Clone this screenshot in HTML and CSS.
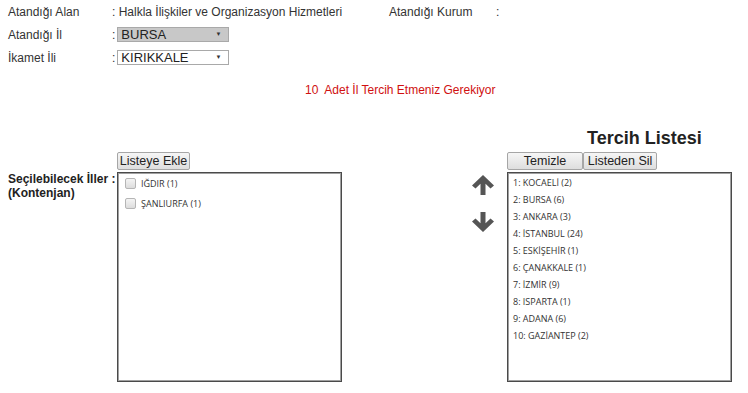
FILE: index.html
```html
<!DOCTYPE html>
<html>
<head>
  <title>İl Tercih Listesi</title>
  <link rel="stylesheet" href="styles.css">
</head>
<body>
  <div class="info">
    <div class="info-row">
      <span class="info-label">Atandığı Alan</span>
      <span class="info-value">: Halkla İlişkiler ve Organizasyon Hizmetleri</span>
      <span class="info-label wide">Atandığı Kurum</span>
      <span class="info-value">:</span>
    </div>
    <div class="info-row">
      <span class="info-label">Atandığı İl</span>
      <span class="info-value">:<span class="select-box disabled">BURSA<span class="caret">&#9660;</span></span></span>
    </div>
    <div class="info-row">
      <span class="info-label">İkamet İli</span>
      <span class="info-value">:<span class="select-box">KIRIKKALE<span class="caret">&#9660;</span></span></span>
    </div>
  </div>

  <p class="notice">10&nbsp; Adet İl Tercih Etmeniz Gerekiyor</p>

  <h3 class="list-title">Tercih Listesi</h3>

  <div class="chooser">
    <div class="chooser-label">Seçilebilecek İller :<br>(Kontenjan)</div>

    <div class="list-col">
      <div class="buttons">
        <button class="btn btn-add">Listeye Ekle</button>
      </div>
      <div class="list-box cities">
        <label class="city"><span class="check"></span>IĞDIR (1)</label>
        <label class="city"><span class="check"></span>ŞANLIURFA (1)</label>
      </div>
    </div>

    <div class="arrows">
      <svg class="arrow" width="22" height="20" viewBox="0 0 22 20">
        <path d="M11 0 L22 10.5 L18.5 13.5 L13.5 8.8 L13.5 20 L8.5 20 L8.5 8.8 L3.5 13.5 L0 10.5 Z" fill="#555"/>
      </svg>
      <svg class="arrow" width="22" height="20" viewBox="0 0 22 20">
        <path d="M11 20 L22 9.5 L18.5 6.5 L13.5 11.2 L13.5 0 L8.5 0 L8.5 11.2 L3.5 6.5 L0 9.5 Z" fill="#555"/>
      </svg>
    </div>

    <div class="list-col">
      <div class="buttons">
        <button class="btn btn-clear">Temizle</button><button class="btn btn-remove">Listeden Sil</button>
      </div>
      <div class="list-box picks">
        <div class="pick">1: KOCAELİ (2)</div>
        <div class="pick">2: BURSA (6)</div>
        <div class="pick">3: ANKARA (3)</div>
        <div class="pick">4: İSTANBUL (24)</div>
        <div class="pick">5: ESKİŞEHİR (1)</div>
        <div class="pick">6: ÇANAKKALE (1)</div>
        <div class="pick">7: İZMİR (9)</div>
        <div class="pick">8: ISPARTA (1)</div>
        <div class="pick">9: ADANA (6)</div>
        <div class="pick">10: GAZİANTEP (2)</div>
      </div>
    </div>
  </div>
</body>
</html>
```

FILE: styles.css
```css
body {
  font-family: "Liberation Sans", Arial, sans-serif;
  font-size: 12px;
  color: #333;
  margin: 0;
  padding: 0 8px;
  background-color: white;
}

/* top info block */
.info-row {
  display: flex;
  align-items: center;
  height: 23px;
}

.info-label {
  flex-shrink: 0;
  width: 104px;
}

.info-label.wide {
  width: 107px;
}

.info-value {
  flex-shrink: 0;
  width: 277px;
  display: flex;
  align-items: center;
  white-space: pre;
}

.select-box {
  display: inline-flex;
  align-items: center;
  justify-content: space-between;
  box-sizing: border-box;
  width: 112px;
  height: 15px;
  margin-left: 2px;
  padding: 0 7px 0 3px;
  border: 1px solid #a9a9a9;
  background-color: white;
  color: #222;
  font-size: 13px;
  line-height: 13px;
}

.select-box.disabled {
  background-color: #c8c8c8;
}

.caret {
  font-size: 6px;
  color: #333;
}

.notice {
  margin: 13px 0 0 297px;
  color: #d01010;
  font-size: 12px;
  line-height: 16px;
}

.list-title {
  margin: 29px 0 0 579px;
  font-size: 18px;
  line-height: 22px;
  color: #222;
}

/* chooser */
.chooser {
  display: flex;
  margin-top: 3px;
}

.chooser-label {
  width: 109px;
  padding-top: 20px;
  font-weight: bold;
  line-height: 14px;
  color: #222;
}

.list-col {
  display: flex;
  flex-direction: column;
  width: 225px;
}

.buttons {
  display: flex;
  height: 18px;
  margin-bottom: 2px;
}

.btn {
  box-sizing: border-box;
  height: 18px;
  padding: 0;
  border: 1px solid #a6a6a6;
  border-radius: 2px;
  background: linear-gradient(#f6f6f6, #dedede);
  font-family: "Liberation Sans", Arial, sans-serif;
  font-size: 12.5px;
  line-height: 15px;
  color: #222;
  white-space: nowrap;
}

.btn-add { width: 73px; }
.btn-clear { width: 76px; }
.btn-remove { width: 74px; }

.list-box {
  box-sizing: border-box;
  height: 210px;
  padding: 0 4px;
  border: 1px solid #4a4a4a;
  box-shadow: inset 0 0 0 1px #a0a0a0;
  font-family: "Open Sans", sans-serif;
  font-size: 9px;
  color: #333;
}

.list-box.picks {
  padding-top: 2px;
}

.city {
  display: flex;
  align-items: center;
  height: 20px;
  padding-left: 3px;
}

.check {
  width: 9px;
  height: 9px;
  margin-right: 5px;
  border: 1px solid #b5b5b5;
  border-radius: 2px;
  background: linear-gradient(#f4f4f4, #dcdcdc);
}

.pick {
  height: 17px;
  line-height: 15px;
  padding-left: 1px;
}

.arrows {
  display: flex;
  flex-direction: column;
  width: 35px;
  padding: 23px 0 0 130px;
  gap: 17px;
}
```
